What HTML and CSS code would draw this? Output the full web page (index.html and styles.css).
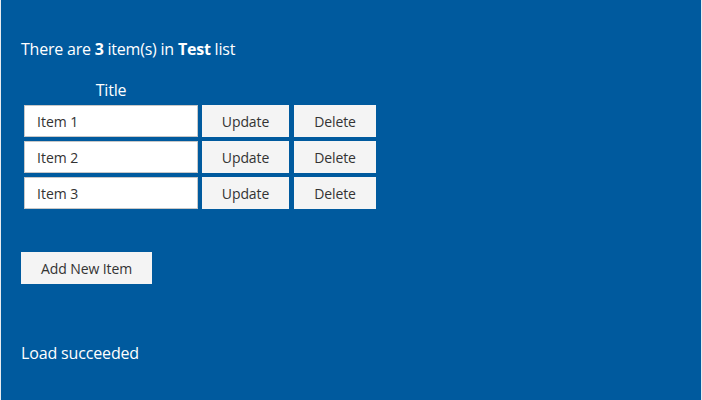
FILE: index.html
```html
<!DOCTYPE html>
<html>
<head>
<meta charset="utf-8">
<link rel="stylesheet" href="styles.css">
</head>
<body>
<div class="app">
  <p class="summary">There are <b>3</b> item(s) in <b>Test</b> list</p>
  <div class="items">
    <div class="th">Title</div>
    <div></div>
    <div></div>
    <input class="field" type="text" value="Item 1">
    <button class="btn">Update</button>
    <button class="btn btn-delete">Delete</button>
    <input class="field" type="text" value="Item 2">
    <button class="btn">Update</button>
    <button class="btn btn-delete">Delete</button>
    <input class="field" type="text" value="Item 3">
    <button class="btn">Update</button>
    <button class="btn btn-delete">Delete</button>
  </div>
  <button class="btn btn-add">Add New Item</button>
  <p class="status">Load succeeded</p>
</div>
</body>
</html>
```
FILE: styles.css
```css
html, body {
  margin: 0;
  padding: 0;
}
body {
  background: #e8ecf0;
  width: 702px;
  height: 400px;
  overflow: hidden;
}
.app {
  margin: 0 1px;
  height: 400px;
  background: #005a9e;
  color: #ffffff;
  font-family: "Open Sans", "Noto Sans", sans-serif;
  padding: 38px 20px 0;
  box-sizing: border-box;
}
.summary {
  margin: 0;
  font-size: 16px;
  line-height: 22px;
  letter-spacing: -0.22px;
}
.summary b {
  font-weight: 700;
}
.items {
  margin: 20px 0 0 3px;
  display: grid;
  grid-template-columns: 174px 87px 83px;
  grid-auto-rows: 32px;
  grid-template-rows: 21px;
  column-gap: 4px;
  row-gap: 4px;
}
.th {
  text-align: center;
  font-size: 16px;
  line-height: 21px;
  letter-spacing: -0.2px;
}
.field {
  box-sizing: border-box;
  width: 174px;
  height: 32px;
  margin: 0;
  border: 1px solid #c8c8c8;
  background: #ffffff;
  padding: 0 12px;
  font-family: "Open Sans", "Noto Sans", sans-serif;
  font-size: 14px;
  color: #333333;
  outline: none;
}
.btn {
  box-sizing: border-box;
  height: 32px;
  margin: 0;
  border: none;
  background: #f4f4f4;
  color: #333333;
  font-family: "Open Sans", "Noto Sans", sans-serif;
  font-size: 14px;
  padding: 0;
  letter-spacing: -0.1px;
}
.btn-delete {
  margin-left: 1px;
}
.btn-add {
  display: block;
  width: 131px;
  margin-top: 43px;
}
.status {
  margin: 58px 0 0;
  font-size: 16px;
  line-height: 22px;
  letter-spacing: -0.15px;
}
```
